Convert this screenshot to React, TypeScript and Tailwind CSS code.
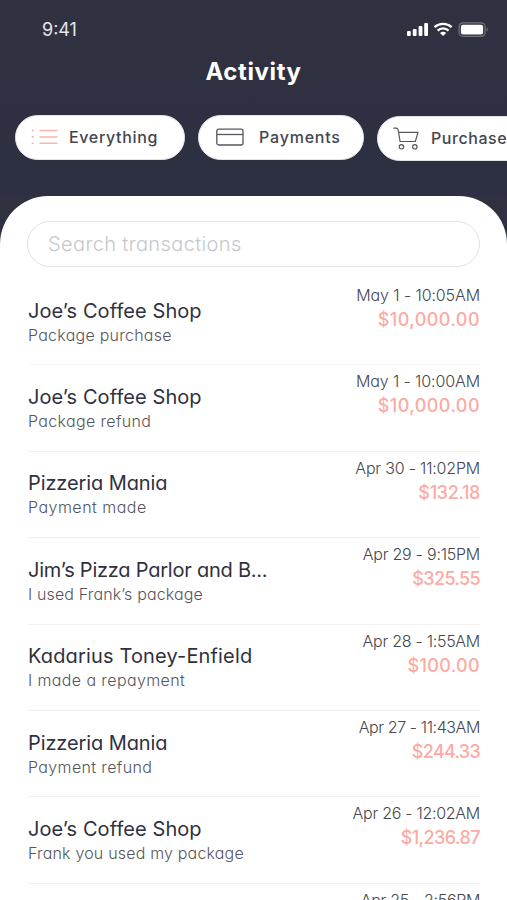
import React from "react";

type Transaction = {
  name: string;
  nameTracking: string;
  note: string;
  noteTracking: string;
  date: string;
  dateTracking: string;
  amount: string;
  amountTracking: string;
};

const transactions: Transaction[] = [
  { name: "Joe’s Coffee Shop", nameTracking: "tracking-[0.08px]", note: "Package purchase", noteTracking: "tracking-[0.25px]", date: "May 1 - 10:05AM", dateTracking: "tracking-[-0.1px]", amount: "$10,000.00", amountTracking: "tracking-[0.45px]" },
  { name: "Joe’s Coffee Shop", nameTracking: "tracking-[0.08px]", note: "Package refund", noteTracking: "tracking-[0.35px]", date: "May 1 - 10:00AM", dateTracking: "tracking-[-0.1px]", amount: "$10,000.00", amountTracking: "tracking-[0.45px]" },
  { name: "Pizzeria Mania", nameTracking: "tracking-[-0.1px]", note: "Payment made", noteTracking: "tracking-[0.48px]", date: "Apr 30 - 11:02PM", dateTracking: "tracking-[-0.19px]", amount: "$132.18", amountTracking: "tracking-[-0.36px]" },
  { name: "Jim’s Pizza Parlor and B...", nameTracking: "tracking-[-0.23px]", note: "I used Frank’s package", noteTracking: "tracking-[0.14px]", date: "Apr 29 - 9:15PM", dateTracking: "tracking-[-0.23px]", amount: "$325.55", amountTracking: "tracking-[-0.64px]" },
  { name: "Kadarius Toney-Enfield", nameTracking: "tracking-[0.15px]", note: "I made a repayment", noteTracking: "tracking-[0.39px]", date: "Apr 28 - 1:55AM", dateTracking: "tracking-[-0.27px]", amount: "$100.00", amountTracking: "tracking-[0.36px]" },
  { name: "Pizzeria Mania", nameTracking: "tracking-[-0.1px]", note: "Payment refund", noteTracking: "tracking-[0.36px]", date: "Apr 27 - 11:43AM", dateTracking: "tracking-[-0.4px]", amount: "$244.33", amountTracking: "tracking-[-0.7px]" },
  { name: "Joe’s Coffee Shop", nameTracking: "tracking-[0.08px]", note: "Frank you used my package", noteTracking: "tracking-[0.18px]", date: "Apr 26 - 12:02AM", dateTracking: "tracking-[-0.28px]", amount: "$1,236.87", amountTracking: "tracking-[-0.55px]" },
];

function StatusIcons() {
  return (
    <svg width="82" height="16" viewBox="0 0 82 16" fill="none">
      <g fill="#fff">
        <rect x="0" y="9" width="3.8" height="5" rx="1" />
        <rect x="5.8" y="7" width="3.8" height="7" rx="1" />
        <rect x="11.6" y="4" width="3.8" height="10" rx="1" />
        <rect x="17.2" y="1" width="3.8" height="13" rx="1" />
      </g>
      <g stroke="#fff" strokeWidth="2.3">
        <path d="M27.5 5.2C32.3 0.7 39.9 0.7 44.7 5.2" />
        <path d="M30.6 8.6C33.8 5.6 38.4 5.6 41.6 8.6" />
      </g>
      <path d="M33 11C34.8 9.4 37.4 9.4 39.2 11L36.1 14Z" fill="#fff" />
      <rect x="52.1" y="0.8" width="26" height="13.6" rx="4" stroke="#73747e" strokeWidth="1.2" />
      <rect x="53.9" y="2.7" width="22.2" height="9.8" rx="2.2" fill="#fff" />
      <path d="M79.6 5.6C81.2 6.4 81.2 8.8 79.6 9.6Z" fill="#73747e" />
    </svg>
  );
}

function ListIcon() {
  return (
    <svg width="28" height="16" viewBox="0 0 28 16" stroke="#fbb5ae" strokeWidth="1.5" strokeLinecap="round">
      <path d="M9 1.5H26M9 8H26M9 14.3H26" />
      <path d="M1.5 1.5H2M1.5 8H2M1.5 14.3H2" strokeWidth="1.8" />
    </svg>
  );
}

function CardIcon() {
  return (
    <svg width="28" height="18" viewBox="0 0 28 18" fill="none" stroke="#55565e" strokeWidth="1.3">
      <rect x="0.8" y="1.2" width="26.2" height="15.8" rx="2" />
      <path d="M1 6.5H27" />
    </svg>
  );
}

function CartIcon() {
  return (
    <svg width="26" height="23" viewBox="0 0 26 23" fill="none" stroke="#55565e" strokeWidth="1.2" strokeLinecap="round" strokeLinejoin="round">
      <path d="M0.8 1.2H3.2C4.6 1.2 5 2 5.2 3L7.1 14.5H22.3L25 5.3H5.7" />
      <circle cx="8.4" cy="19.8" r="2.2" />
      <circle cx="21.8" cy="19.8" r="2.2" />
    </svg>
  );
}

function Row({ item }: { item: Transaction }) {
  return (
    <li className="flex h-[86.4px] shrink-0 justify-between border-b border-[#f1f1f3] first:border-[#f9f9fa]">
      <div className="pt-[19.6px]">
        <p className={`text-[20px] leading-[24px] text-[#303140] ${item.nameTracking}`}>{item.name}</p>
        <p className={`text-[16px] leading-[24px] font-light text-[#55565d] ${item.noteTracking}`}>{item.note}</p>
      </div>
      <div className="flex flex-col items-end pt-1">
        <p className={`text-[16px] leading-[24px] font-light text-[#45464e] ${item.dateTracking}`}>{item.date}</p>
        <p className={`text-[18px] leading-[25px] font-medium text-[#fdaaa2] ${item.amountTracking}`}>{item.amount}</p>
      </div>
    </li>
  );
}

export default function App() {
  return (
    <div className="flex h-[900px] w-[507px] flex-col overflow-hidden bg-[#303140] font-['Inter',sans-serif] whitespace-nowrap">
      <header className="flex h-[196px] shrink-0 flex-col bg-linear-to-b from-[#303140] to-[#2d3042]">
        <div className="flex h-[58px] items-center justify-between pt-[2px] pr-[18px] pl-[42px]">
          <span className="text-[18px] leading-6 text-[#e6e6ea]">9:41</span>
          <StatusIcons />
        </div>
        <h1 className="text-center text-[24px] leading-7 font-bold tracking-[0.6px] text-white">Activity</h1>
        <nav className="mt-[28.5px] flex w-[580px] gap-[13px] pl-[15px] text-[16px] font-medium text-[#44454d]">
          <div className="flex h-[45px] w-[170px] shrink-0 items-center rounded-full border border-[#e3e4e8] bg-white pl-[15px]">
            <ListIcon />
            <span className="ml-[10px] tracking-[0.65px]">Everything</span>
          </div>
          <div className="flex h-[45px] w-[166px] shrink-0 items-center rounded-full border border-[#e3e4e8] bg-white pl-[17px]">
            <CardIcon />
            <span className="ml-[15px] tracking-[0.8px]">Payments</span>
          </div>
          <div className="mt-px flex h-[45px] w-[170px] shrink-0 items-center rounded-full border border-[#e3e4e8] bg-white pl-[15px]">
            <CartIcon />
            <span className="ml-[12px] tracking-[0.55px]">Purchase</span>
          </div>
        </nav>
      </header>
      <main className="flex h-[704px] shrink-0 flex-col overflow-hidden rounded-t-[48px] bg-white px-[27px] pt-[24.5px] [font-feature-settings:'cv11']">
        <div className="flex h-[46px] shrink-0 items-center rounded-full border-[1.5px] border-[#dfe0e3] px-[20px] text-[20px] font-light tracking-[0.38px] text-[#c5c8ce]">
          Search transactions
        </div>
        <ul className="mt-[12.6px] flex flex-col pl-px">
          {transactions.map((item) => (
            <Row key={item.date} item={item} />
          ))}
          <li className="flex h-[28px] shrink-0 justify-end pt-1">
            <p className="text-[16px] leading-[24px] font-light tracking-[-0.33px] text-[#45464e]">Apr 25 - 2:56PM</p>
          </li>
        </ul>
      </main>
    </div>
  );
}
